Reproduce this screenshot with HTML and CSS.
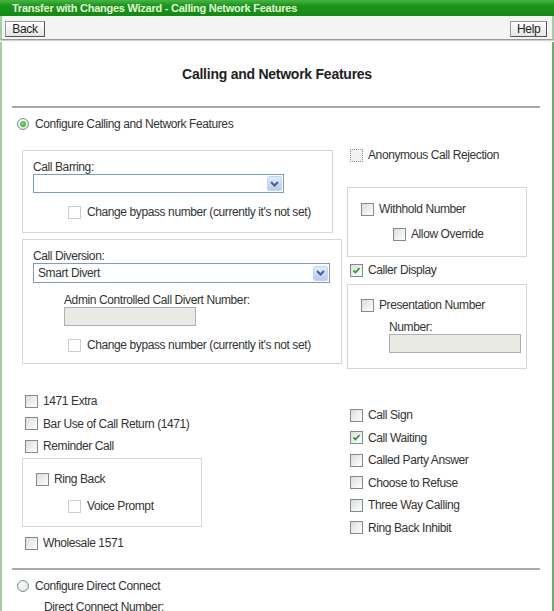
FILE: index.html
```html
<!DOCTYPE html>
<html lang="en">

<head>
    <meta charset="UTF-8">
    <title>Calling Network Features</title>
    <link rel="stylesheet" href="styles.css">
</head>

<body>
    <div class="titlebar">Transfer with Changes Wizard - Calling Network Features</div>
    <div class="toolbar">
        <button class="btn">Back</button>
        <button class="btn">Help</button>
    </div>

    <div class="page">
        <h2 class="heading">Calling and Network Features</h2>
        <hr class="rule">

        <div class="option"><span class="radio on"></span>Configure Calling and Network Features</div>

        <div class="cols top-cols">
            <div class="col-left">
                <div class="box barring">
                    <div class="label">Call Barring:</div>
                    <div class="select wide"><span class="value"></span><span class="drop"><svg width="9" height="6" viewBox="0 0 9 6"><path d="M1 1 L4.5 4.5 L8 1" fill="none" stroke="#4d6185" stroke-width="2"/></svg></span></div>
                    <div class="row indent-cb"><span class="cb off"></span><span class="muted">Change bypass number (currently it's not set)</span></div>
                </div>

                <div class="box diversion">
                    <div class="label">Call Diversion:</div>
                    <div class="select full"><span class="value">Smart Divert</span><span class="drop"><svg width="9" height="6" viewBox="0 0 9 6"><path d="M1 1 L4.5 4.5 L8 1" fill="none" stroke="#4d6185" stroke-width="2"/></svg></span></div>
                    <div class="label sub-label">Admin Controlled Call Divert Number:</div>
                    <div class="textbox sub-input"></div>
                    <div class="row indent-cb bypass"><span class="cb off"></span><span class="muted">Change bypass number (currently it's not set)</span></div>
                </div>
            </div>

            <div class="col-right">
                <div class="row single"><span class="cb dotted"></span>Anonymous Call Rejection</div>

                <div class="box withhold">
                    <div class="row"><span class="cb"></span>Withhold Number</div>
                    <div class="row nested"><span class="cb"></span>Allow Override</div>
                </div>

                <div class="row single caller"><span class="cb on"><svg width="9" height="9" viewBox="0 0 9 9"><path d="M1.5 4.5 L3.5 6.5 L7.5 2" fill="none" stroke="#2f9a2f" stroke-width="1.8"/></svg></span>Caller Display</div>

                <div class="box presentation">
                    <div class="row"><span class="cb"></span>Presentation Number</div>
                    <div class="label number-label">Number:</div>
                    <div class="textbox number-input"></div>
                </div>
            </div>
        </div>

        <div class="cols bottom-cols">
            <div class="col-left list">
                <div class="row single"><span class="cb"></span>1471 Extra</div>
                <div class="row single"><span class="cb"></span>Bar Use of Call Return (1471)</div>
                <div class="row single"><span class="cb"></span>Reminder Call</div>
                <div class="box ringback">
                    <div class="row"><span class="cb"></span>Ring Back</div>
                    <div class="row nested"><span class="cb off"></span>Voice Prompt</div>
                </div>
                <div class="row single"><span class="cb"></span>Wholesale 1571</div>
            </div>

            <div class="col-right list right-list">
                <div class="row single"><span class="cb"></span>Call Sign</div>
                <div class="row single"><span class="cb on"><svg width="9" height="9" viewBox="0 0 9 9"><path d="M1.5 4.5 L3.5 6.5 L7.5 2" fill="none" stroke="#2f9a2f" stroke-width="1.8"/></svg></span>Call Waiting</div>
                <div class="row single"><span class="cb"></span>Called Party Answer</div>
                <div class="row single"><span class="cb"></span>Choose to Refuse</div>
                <div class="row single"><span class="cb"></span>Three Way Calling</div>
                <div class="row single"><span class="cb"></span>Ring Back Inhibit</div>
            </div>
        </div>

        <hr class="rule second">

        <div class="option"><span class="radio"></span>Configure Direct Connect</div>
        <div class="label direct">Direct Connect Number:</div>
    </div>
</body>

</html>
```

FILE: styles.css
```css
body {
    margin: 0;
    padding: 0;
    font-family: "Liberation Sans", Arial, sans-serif;
    font-size: 12px;
    letter-spacing: -0.4px;
    color: #333;
    background-color: #fff;
    width: 554px;
    height: 611px;
    overflow: hidden;
}

.titlebar {
    height: 16px;
    line-height: 16px;
    padding-left: 12px;
    font-size: 11px;
    font-weight: bold;
    letter-spacing: -0.25px;
    color: #e2f4d6;
    background: linear-gradient(#46b446 0%, #1c951c 35%, #138a13 100%);
}

.toolbar {
    height: 24px;
    display: flex;
    justify-content: space-between;
    align-items: flex-start;
    padding: 5px 5px 0 5px;
    box-sizing: border-box;
    background-color: #f4f4f4;
    border-bottom: 1px solid #9a9a9a;
    box-shadow: 0 1px 1px #d0d0d0;
    border-left: 2px solid #a6cba6;
    border-right: 2px solid #a6cba6;
    margin-bottom: 2px;
}

.btn {
    height: 16px;
    padding: 0 6px;
    font-family: "Liberation Sans", Arial, sans-serif;
    font-size: 12px;
    letter-spacing: -0.3px;
    color: #222;
    background: linear-gradient(#ffffff, #e4e4e4);
    border: 1px solid #9a9a9a;
    border-right-color: #555;
    border-bottom-color: #555;
    line-height: 13px;
}

.btn:first-child {
    width: 40px;
    margin-left: -2px;
}

.btn:last-child {
    width: 37px;
    margin-right: 0;
}

.page {
    border-left: 2px solid #a6cba6;
    border-right: 2px solid #6ea96e;
    height: 569px;
}

.heading {
    margin: 0;
    padding-top: 24px;
    height: 16px;
    line-height: 16px;
    font-size: 14px;
    letter-spacing: -0.25px;
    text-align: center;
    color: #222;
}

.rule {
    margin: 24px 12px 0 10px;
    border: none;
    border-top: 2px solid #a9a9a9;
    height: 0;
}

.rule.second {
    margin-top: 17px;
}

.option {
    display: flex;
    align-items: center;
    height: 16px;
    margin-top: 8px;
    padding-left: 15px;
}

.radio {
    width: 10px;
    height: 10px;
    border: 1px solid #7d8b99;
    border-radius: 50%;
    background: radial-gradient(circle at 35% 35%, #fff, #dcdcd6);
    margin-right: 6px;
    position: relative;
}

.radio.on::after {
    content: "";
    position: absolute;
    left: 2px;
    top: 2px;
    width: 6px;
    height: 6px;
    border-radius: 50%;
    background: radial-gradient(circle at 40% 40%, #7fd97f, #2a9e2a);
}

.cols {
    display: flex;
    padding-left: 20px;
}

.top-cols {
    margin-top: 15px;
}

.col-left {
    width: 325px;
}

.col-right {
    width: 180px;
}

.box {
    border: 1px solid #d6d6d6;
    box-sizing: border-box;
}

.row {
    display: flex;
    align-items: center;
    height: 16px;
    white-space: nowrap;
}

.single {
    padding-left: 3px;
}

.cb {
    display: inline-flex;
    align-items: center;
    justify-content: center;
    width: 11px;
    height: 11px;
    border: 1px solid #7d8b99;
    background: linear-gradient(135deg, #dcdcd7, #ffffff);
    margin-right: 5px;
    flex-shrink: 0;
}

.cb.off {
    border-color: #c9ced3;
    background: #fff;
    margin-right: 6px;
}

.cb.dotted {
    border: 1px dotted #8f8f8f;
    background: #f2f2f2;
}

.muted {
    color: #333;
}

.label {
    height: 14px;
    line-height: 14px;
}

.select {
    display: flex;
    justify-content: space-between;
    align-items: center;
    height: 19px;
    box-sizing: border-box;
    border: 1px solid #7f9db9;
    background-color: #fff;
    padding: 0 1px 0 4px;
}

.select.wide {
    width: 251px;
}

.select.full {
    width: 297px;
    height: 20px;
}

.drop {
    display: flex;
    align-items: center;
    justify-content: center;
    width: 15px;
    height: 15px;
    box-sizing: border-box;
    border: 1px solid #c3d3f7;
    border-radius: 2px;
    background: linear-gradient(#e3ebfd, #b8cbf5);
}

.textbox {
    width: 132px;
    height: 19px;
    box-sizing: border-box;
    border: 1px solid #a9b0b6;
    background-color: #eaeae4;
}

.barring {
    width: 311px;
    height: 83px;
    margin-top: 3px;
    padding: 9px 0 0 10px;
}

.indent-cb {
    padding-left: 35px;
    margin-top: 11px;
}

.diversion {
    width: 320px;
    height: 125px;
    margin-top: 6px;
    padding: 9px 0 0 10px;
}

.sub-label {
    margin-top: 10px;
    padding-left: 31px;
}

.sub-input {
    margin-left: 31px;
}

.bypass {
    margin-top: 11px;
}

.col-right .single {
    padding-left: 3px;
}

.withhold {
    width: 180px;
    height: 70px;
    margin-top: 24px;
    padding: 13px 0 0 13px;
}

.nested {
    padding-left: 32px;
    margin-top: 9px;
}

.caller {
    margin-top: 5px;
}

.presentation {
    width: 180px;
    height: 85px;
    margin-top: 6px;
    padding: 12px 0 0 13px;
}

.number-label {
    margin-top: 8px;
    padding-left: 28px;
    height: 13px;
    line-height: 13px;
}

.number-input {
    margin-left: 28px;
}

.bottom-cols {
    margin-top: 24px;
}

.list {
    display: flex;
    flex-direction: column;
    gap: 6.6px;
}

.ringback {
    width: 180px;
    height: 69px;
    margin-top: -2.6px;
    padding: 12px 0 0 13px;
}

.ringback .nested {
    margin-top: 11px;
}

.ringback + .single {
    margin-top: 1.4px;
}

.right-list {
    padding-top: 14px;
}

.direct {
    margin-top: 5px;
    padding-left: 42px;
    height: 16px;
    line-height: 16px;
}
```
